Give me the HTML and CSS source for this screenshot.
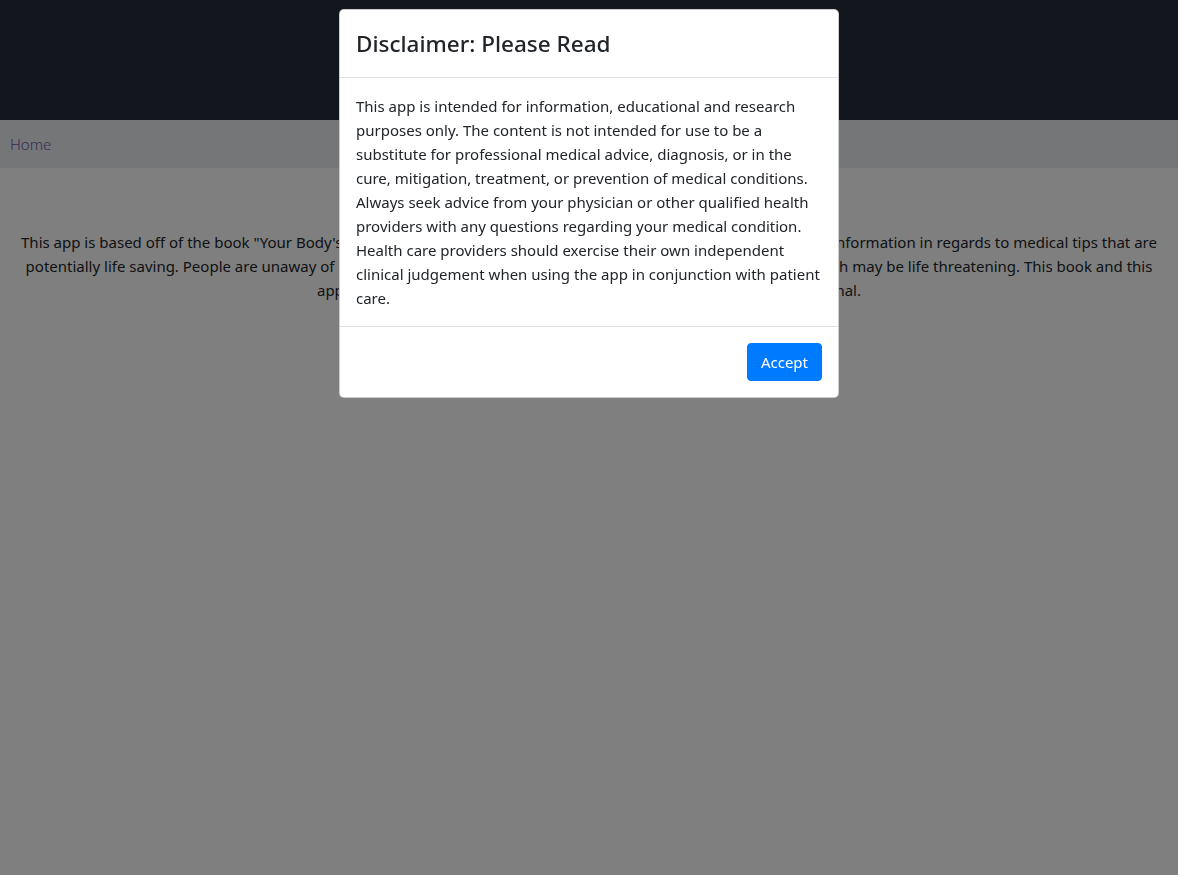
FILE: index.html
```html
<!DOCTYPE html>
<html lang="en">
<head>
<meta charset="utf-8">
<title>Disclaimer</title>
<link rel="stylesheet" href="styles.css">
</head>
<body>
<header class="topbar"></header>
<nav class="navbar"><a class="nav-link" href="#">Home</a></nav>
<main class="content">
  <p class="intro">This app is based off of the book "Your Body's Red Light Warning Signals" which gives the general public important information in regards to medical tips that are potentially life saving. People are unaway of underlying symptoms and early warning signs in their own bodies which may be life threatening. This book and this app are meant to educate and are not a substitute for a medical professional.</p>
</main>
<div class="backdrop"></div>
<div class="modal">
  <div class="modal-dialog">
    <div class="modal-header"><h4 class="modal-title">Disclaimer: Please Read</h4></div>
    <div class="modal-body">This app is intended for information, educational and research purposes only. The content is not intended for use to be a substitute for professional medical advice, diagnosis, or in the cure, mitigation, treatment, or prevention of medical conditions. Always seek advice from your physician or other qualified health providers with any questions regarding your medical condition. Health care providers should exercise their own independent clinical judgement when using the app in conjunction with patient care.</div>
    <div class="modal-footer"><button class="btn-accept" type="button">Accept</button></div>
  </div>
</div>
</body>
</html>
```
FILE: styles.css
```css
html, body {
  margin: 0;
  padding: 0;
}
body {
  font-family: "Noto Sans", "Open Sans", sans-serif;
  font-size: 15px;
  line-height: 24px;
  color: #212529;
  background: #ffffff;
  min-height: 875px;
}
.topbar {
  height: 120px;
  background: #262c38;
}
.navbar {
  height: 48px;
  background: #eaecf0;
  display: flex;
  align-items: center;
  padding: 0 10px;
}
.nav-link {
  color: #6e5a9e;
  text-decoration: none;
  font-weight: 300;
  font-size: 15px;
}
.content {
  padding: 62px 16px 0;
}
.intro {
  margin: 0;
  text-align: center;
}
.backdrop {
  position: fixed;
  inset: 0;
  background: rgba(0, 0, 0, 0.5);
}
.modal {
  position: fixed;
  inset: 0;
  display: flex;
  justify-content: center;
  align-items: flex-start;
}
.modal-dialog {
  width: 498px;
  margin-top: 9px;
  background: #ffffff;
  border: 1px solid rgba(0, 0, 0, 0.2);
  border-radius: 5px;
  overflow: hidden;
}
.modal-header {
  padding: 16px 16px 15px;
  border-bottom: 1px solid #dee2e6;
}
.modal-title {
  margin: 0;
  font-size: 22.5px;
  font-weight: 500;
  line-height: 36px;
}
.modal-body {
  padding: 16px;
}
.modal-footer {
  padding: 16px;
  border-top: 1px solid #dee2e6;
  display: flex;
  justify-content: flex-end;
}
.btn-accept {
  font-family: inherit;
  font-size: 15px;
  line-height: 24px;
  height: 38px;
  padding: 6px 13px;
  color: #ffffff;
  background: #007bff;
  border: 1px solid #007bff;
  border-radius: 4px;
}
```
